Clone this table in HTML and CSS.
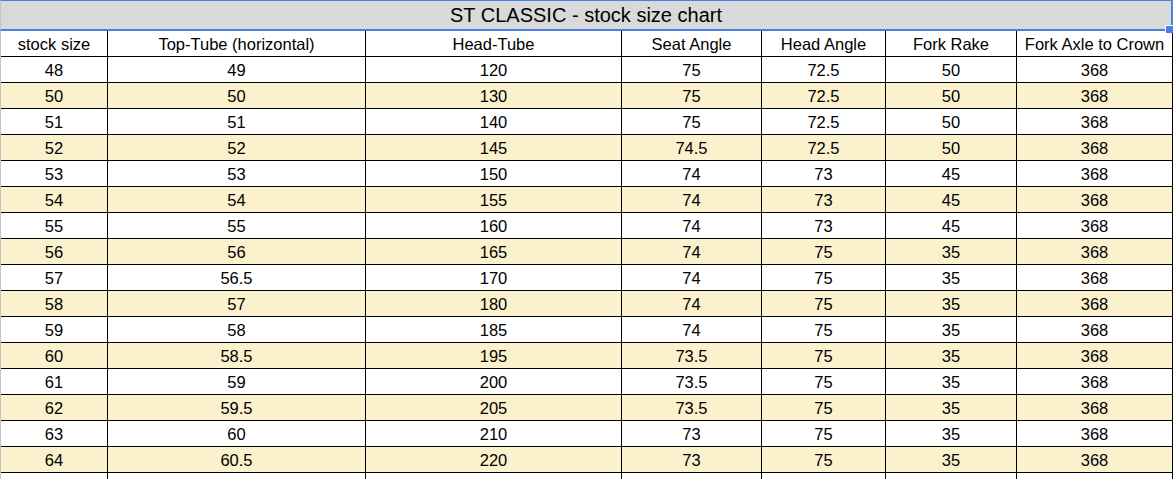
FILE: index.html
```html
<!DOCTYPE html>
<html>
<head>
<meta charset="utf-8">
<title>ST CLASSIC - stock size chart</title>
<link rel="stylesheet" href="styles.css">
</head>
<body>
<div class="sheet">
  <div class="title">ST CLASSIC - stock size chart<span class="handle"></span></div>
  <div class="grid">
    <div class="row head"><div>stock size</div><div>Top-Tube (horizontal)</div><div>Head-Tube</div><div>Seat Angle</div><div>Head Angle</div><div>Fork Rake</div><div>Fork Axle to Crown</div></div>
    <div class="row"><div>48</div><div>49</div><div>120</div><div>75</div><div>72.5</div><div>50</div><div>368</div></div>
    <div class="row alt"><div>50</div><div>50</div><div>130</div><div>75</div><div>72.5</div><div>50</div><div>368</div></div>
    <div class="row"><div>51</div><div>51</div><div>140</div><div>75</div><div>72.5</div><div>50</div><div>368</div></div>
    <div class="row alt"><div>52</div><div>52</div><div>145</div><div>74.5</div><div>72.5</div><div>50</div><div>368</div></div>
    <div class="row"><div>53</div><div>53</div><div>150</div><div>74</div><div>73</div><div>45</div><div>368</div></div>
    <div class="row alt"><div>54</div><div>54</div><div>155</div><div>74</div><div>73</div><div>45</div><div>368</div></div>
    <div class="row"><div>55</div><div>55</div><div>160</div><div>74</div><div>73</div><div>45</div><div>368</div></div>
    <div class="row alt"><div>56</div><div>56</div><div>165</div><div>74</div><div>75</div><div>35</div><div>368</div></div>
    <div class="row"><div>57</div><div>56.5</div><div>170</div><div>74</div><div>75</div><div>35</div><div>368</div></div>
    <div class="row alt"><div>58</div><div>57</div><div>180</div><div>74</div><div>75</div><div>35</div><div>368</div></div>
    <div class="row"><div>59</div><div>58</div><div>185</div><div>74</div><div>75</div><div>35</div><div>368</div></div>
    <div class="row alt"><div>60</div><div>58.5</div><div>195</div><div>73.5</div><div>75</div><div>35</div><div>368</div></div>
    <div class="row"><div>61</div><div>59</div><div>200</div><div>73.5</div><div>75</div><div>35</div><div>368</div></div>
    <div class="row alt"><div>62</div><div>59.5</div><div>205</div><div>73.5</div><div>75</div><div>35</div><div>368</div></div>
    <div class="row"><div>63</div><div>60</div><div>210</div><div>73</div><div>75</div><div>35</div><div>368</div></div>
    <div class="row alt"><div>64</div><div>60.5</div><div>220</div><div>73</div><div>75</div><div>35</div><div>368</div></div>
    <div class="row"><div></div><div></div><div></div><div></div><div></div><div></div><div></div></div>
  </div>
</div>
</body>
</html>
```
FILE: styles.css
```css
html, body {
  margin: 0;
  padding: 0;
  background: #ffffff;
}
body {
  font-family: "Liberation Sans", Arial, sans-serif;
  color: #000;
  overflow: hidden;
}
.sheet {
  position: relative;
  width: 1173px;
}
.title {
  position: relative;
  box-sizing: border-box;
  width: 1173px;
  height: 31px;
  background: #d9d9d9;
  border-top: 1px solid #4a80e6;
  border-bottom: 2px solid #4a80e6;
  border-right: 2px solid #4a80e6;
  border-left: 1px solid #c4c4c4;
  font-size: 20px;
  line-height: 28px;
  text-align: center;
}
.handle {
  position: absolute;
  right: -2px;
  top: 24px;
  width: 7px;
  height: 7px;
  background: #4a80e6;
  border-left: 1px solid #fff;
  border-top: 1px solid #fff;
}
.grid {
  display: flex;
  flex-direction: column;
  border-left: 1px solid #c4c4c4;
  width: 1172px;
}
.row {
  display: grid;
  grid-template-columns: 107px 258px 256px 140px 124px 131px 156px;
  height: 26px;
}
.row.alt {
  background: #fcf1cd;
}
.row > div {
  box-sizing: border-box;
  height: 26px;
  padding-top: 1px;
  border-right: 1px solid #000;
  border-bottom: 1px solid #000;
  display: flex;
  align-items: center;
  justify-content: center;
  font-size: 16.5px;
  white-space: nowrap;
}
```
